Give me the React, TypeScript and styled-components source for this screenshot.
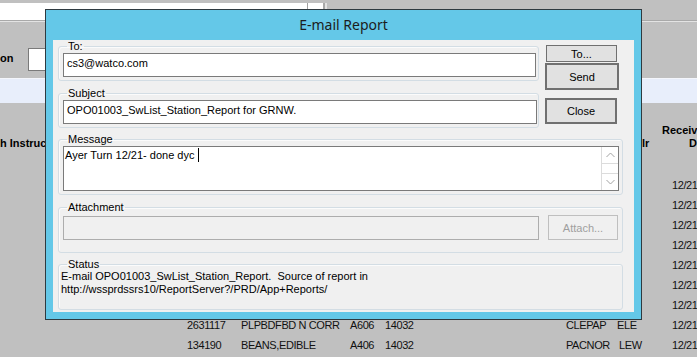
import React from "react";
import styled, { createGlobalStyle } from "styled-components";

const Global = createGlobalStyle`
  html, body { margin: 0; padding: 0; background: #c0c0c0; overflow: hidden; }
  #root { width: 697px; height: 357px; }
  * { box-sizing: border-box; }
`;

const Screen = styled.div`
  position: relative;
  width: 697px;
  height: 357px;
  overflow: hidden;
  background: #c0c0c0;
  font-family: "Liberation Sans", Arial, sans-serif;
  font-size: 11px;
  color: #000;
`;

/* ---------- background application ---------- */
const TopGap = styled.div`
  height: 3px;
`;

const AddressStrip = styled.div`
  display: flex;
  height: 17px;
`;

const WhiteField = styled.div<{ $w: number }>`
  width: ${(p) => p.$w}px;
  background: #fff;
`;

const StripDivider = styled.div`
  width: 1px;
  background: #a0a0a0;
`;

const StripEnd = styled.div`
  width: 4px;
  border-left: 2px solid #a8a8a8;
  background: #e2e2e2;
`;

const Rule = styled.div`
  height: 2px;
  border-top: 1px solid #a9a9a9;
  background: #e3e3e3;
`;

const Toolbar = styled.div`
  height: 56px;
  display: flex;
  align-items: flex-start;
  padding-top: 26px;
`;

const ToolLabel = styled.div`
  width: 28px;
  font-weight: bold;
  font-size: 11px;
  line-height: 20px;
`;

const ToolInput = styled.div`
  width: 40px;
  height: 23px;
  background: #fff;
  border: 1px solid #7a7a7a;
`;

const Band = styled.div`
  height: 25px;
  background: #e8eefb;
  border-top: 1px solid #f4f6fc;
`;

const columns = "187px 54px 109px 35px 181px 50px 46px 1fr";

const HeaderGrid = styled.div`
  display: grid;
  grid-template-columns: ${columns};
  grid-auto-rows: 13px;
  align-content: start;
  height: 72px;
  padding-top: 21px;
  font-weight: bold;
  line-height: 13px;
`;

const HeadCell = styled.div<{ $row: number; $col: number; $pad?: number }>`
  grid-row: ${(p) => p.$row};
  grid-column: ${(p) => p.$col};
  padding-left: ${(p) => p.$pad ?? 0}px;
  white-space: nowrap;
`;

const DataRow = styled.div`
  display: grid;
  grid-template-columns: ${columns};
  height: 20px;
  line-height: 20px;
  letter-spacing: -0.4px;
  color: #111;
  white-space: nowrap;
`;

const Cell = styled.div<{ $pad?: number }>`
  padding-left: ${(p) => p.$pad ?? 0}px;
`;

/* ---------- dialog window ---------- */
const Dialog = styled.div`
  position: absolute;
  left: 45px;
  top: 9px;
  width: 597px;
  height: 311px;
  border: 1px solid #2e3a40;
  background: #64c8e8;
  padding: 0 7px 7px 7px;
  display: flex;
  flex-direction: column;
`;

const TitleBar = styled.div`
  height: 30px;
  display: flex;
  align-items: center;
  justify-content: center;
  font-family: "Noto Sans", "Open Sans", sans-serif;
  font-size: 14px;
  color: #1c1c1c;
  padding-bottom: 2px;
`;

const Client = styled.div`
  flex: 1;
  background: #f0f0f0;
  padding: 0 11px 0 5px;
  display: flex;
  flex-direction: column;
`;

const TopSection = styled.div`
  display: flex;
  gap: 6px;
`;

const LeftColumn = styled.div`
  width: 481px;
  display: flex;
  flex-direction: column;
`;

const ButtonColumn = styled.div`
  width: 74px;
  padding-top: 5px;
  display: flex;
  flex-direction: column;
  align-items: flex-start;
`;

const Group = styled.fieldset<{ $mt?: number; $pb?: number }>`
  margin: ${(p) => p.$mt ?? 0}px 0 0 0;
  padding: 0 2px ${(p) => p.$pb ?? 3}px 2px;
  border: 1px solid #d3dde4;
  border-radius: 3px;
  min-width: 0;
  box-shadow: inset 1px 1px 0 #fbfbfb;
`;

const Legend = styled.legend`
  margin-left: 6px;
  padding: 0 1px;
  font-size: 11px;
  line-height: 12px;
  color: #000;
`;

const TextBox = styled.div<{ $w: number }>`
  width: ${(p) => p.$w}px;
  height: 24px;
  margin: 1px 0 0 2px;
  background: #fff;
  border: 1px solid #7a7a7a;
  padding: 0 3px;
  line-height: 19px;
  white-space: nowrap;
  overflow: hidden;
`;

const MemoBox = styled.div`
  width: 556px;
  height: 45px;
  margin: 1px 0 0 2px;
  background: #fff;
  border: 1px solid #7a7a7a;
  display: flex;
`;

const MemoText = styled.div`
  flex: 1;
  padding: 1px 0 0 1px;
  line-height: 14px;
  white-space: pre;
  display: flex;
  align-items: flex-start;
`;

const Caret = styled.span`
  display: inline-block;
  width: 1px;
  height: 14px;
  background: #000;
`;

const ScrollBar = styled.div`
  width: 17px;
  display: flex;
  flex-direction: column;
  border-left: 1px solid #dcdcdc;
`;

const ScrollArrow = styled.div`
  height: 16px;
  display: flex;
  align-items: center;
  justify-content: center;
  background: #fff;
`;

const ScrollTrack = styled.div`
  flex: 1;
  border-top: 1px solid #dcdcdc;
  border-bottom: 1px solid #dcdcdc;
`;

const AttachRow = styled.div`
  display: flex;
  align-items: flex-start;
  gap: 9px;
  margin-top: 2px;
`;

const DisabledField = styled.div`
  width: 476px;
  height: 24px;
  margin-left: 2px;
  margin-top: 1px;
  background: #f0f0f0;
  border: 1px solid #adadad;
`;

const Button = styled.div<{ $w: number; $h: number; $mt?: number; $ml?: number; $bw?: number; $disabled?: boolean }>`
  width: ${(p) => p.$w}px;
  height: ${(p) => p.$h}px;
  margin-top: ${(p) => p.$mt ?? 0}px;
  margin-left: ${(p) => p.$ml ?? 0}px;
  border: ${(p) => p.$bw ?? 1}px solid ${(p) => (p.$disabled ? "#bfbfbf" : "#707070")};
  background: ${(p) => (p.$disabled ? "#f0f0f0" : "#e1e1e1")};
  color: ${(p) => (p.$disabled ? "#9f9f9f" : "#000")};
  display: flex;
  align-items: center;
  justify-content: center;
  font-size: 11px;
  line-height: 12px;
`;

const StatusText = styled.div`
  line-height: 13px;
  white-space: pre;
`;

const Chevron = ({ up }: { up: boolean }) => (
  <svg width="9" height="6" viewBox="0 0 9 6">
    <path
      d={up ? "M0.5 5 L4.5 1 L8.5 5" : "M0.5 1 L4.5 5 L8.5 1"}
      fill="none"
      stroke="#a2a2a2"
      strokeWidth="1"
    />
  </svg>
);

const dateRows = Array.from({ length: 7 });

export default function App() {
  return (
    <Screen>
      <Global />
      <TopGap />
      <AddressStrip>
        <WhiteField $w={307} />
        <StripDivider />
        <WhiteField $w={15} />
        <StripEnd />
      </AddressStrip>
      <Rule />
      <Toolbar>
        <ToolLabel>on</ToolLabel>
        <ToolInput />
      </Toolbar>
      <Band />
      <HeaderGrid>
        <HeadCell $row={2} $col={1}>h Instruc</HeadCell>
        <HeadCell $row={2} $col={7} $pad={26}>lr</HeadCell>
        <HeadCell $row={1} $col={8}>Received</HeadCell>
        <HeadCell $row={2} $col={8} $pad={27}>Date</HeadCell>
      </HeaderGrid>
      {dateRows.map((_, i) => (
        <DataRow key={i}>
          <Cell />
          <Cell />
          <Cell />
          <Cell />
          <Cell />
          <Cell />
          <Cell />
          <Cell $pad={10}>12/21</Cell>
        </DataRow>
      ))}
      <DataRow>
        <Cell />
        <Cell>2631117</Cell>
        <Cell>PLPBDFBD N CORR</Cell>
        <Cell>A606</Cell>
        <Cell>14032</Cell>
        <Cell>CLEPAP</Cell>
        <Cell $pad={1}>ELE</Cell>
        <Cell $pad={10}>12/21</Cell>
      </DataRow>
      <DataRow>
        <Cell />
        <Cell>134190</Cell>
        <Cell>BEANS,EDIBLE</Cell>
        <Cell>A406</Cell>
        <Cell>14032</Cell>
        <Cell>PACNOR</Cell>
        <Cell $pad={3}>LEW</Cell>
        <Cell $pad={10}>12/21</Cell>
      </DataRow>

      <Dialog>
        <TitleBar>E-mail Report</TitleBar>
        <Client>
          <TopSection>
            <LeftColumn>
              <Group>
                <Legend>To:</Legend>
                <TextBox $w={473}>cs3@watco.com</TextBox>
              </Group>
              <Group $mt={6}>
                <Legend>Subject</Legend>
                <TextBox $w={474}>OPO01003_SwList_Station_Report for GRNW.</TextBox>
              </Group>
            </LeftColumn>
            <ButtonColumn>
              <Button $w={71} $h={17} $ml={1}>To...</Button>
              <Button $w={74} $h={27} $mt={1} $bw={2}>Send</Button>
              <Button $w={72} $h={26} $mt={8} $bw={2}>Close</Button>
            </ButtonColumn>
          </TopSection>
          <Group $mt={5}>
            <Legend>Message</Legend>
            <MemoBox>
              <MemoText>
                Ayer Turn 12/21- done dyc <Caret />
              </MemoText>
              <ScrollBar>
                <ScrollArrow>
                  <Chevron up />
                </ScrollArrow>
                <ScrollTrack />
                <ScrollArrow>
                  <Chevron up={false} />
                </ScrollArrow>
              </ScrollBar>
            </MemoBox>
          </Group>
          <Group $mt={6} $pb={12}>
            <Legend>Attachment</Legend>
            <AttachRow>
              <DisabledField />
              <Button $w={70} $h={25} $disabled>
                Attach...
              </Button>
            </AttachRow>
          </Group>
          <Group $mt={5} $pb={13}>
            <Legend>Status</Legend>
            <StatusText>
              {"E-mail OPO01003_SwList_Station_Report.  Source of report in"}
              <br />
              {"http://wssprdssrs10/ReportServer?/PRD/App+Reports/"}
            </StatusText>
          </Group>
        </Client>
      </Dialog>
    </Screen>
  );
}
